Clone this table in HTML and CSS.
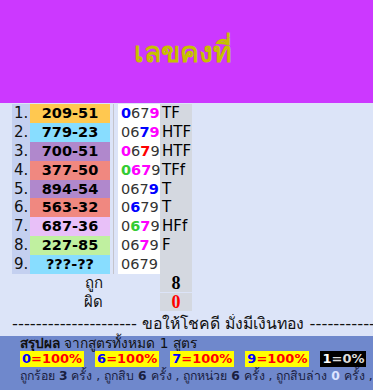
FILE: index.html
```html
<!DOCTYPE html>
<html lang="th">
<head>
<meta charset="utf-8">
<link rel="stylesheet" href="styles.css">
</head>
<body>
<header class="top"><h1 class="title">เลขคงที่</h1></header>
<main class="board">
  <div class="grid">
    <div class="n">1.</div><div class="c c-or">209-51</div><div class="sep"></div><div class="w"><b class="bl">0</b>67<b class="mg">9</b></div><div class="g">TF</div>
    <div class="n">2.</div><div class="c c-sky">779-23</div><div class="sep"></div><div class="w">06<b class="bl">7</b><b class="mg">9</b></div><div class="g">HTF</div>
    <div class="n">3.</div><div class="c c-pu">700-51</div><div class="sep"></div><div class="w"><b class="mg">0</b>6<b class="rd">7</b>9</div><div class="g">HTF</div>
    <div class="n">4.</div><div class="c c-sa">377-50</div><div class="sep"></div><div class="w"><b class="gr">0</b><b class="mg">6</b><b class="mg">7</b>9</div><div class="g">TFf</div>
    <div class="n">5.</div><div class="c c-pu">894-54</div><div class="sep"></div><div class="w">067<b class="bl">9</b></div><div class="g">T</div>
    <div class="n">6.</div><div class="c c-sa">563-32</div><div class="sep"></div><div class="w">0<b class="bl">6</b>79</div><div class="g">T</div>
    <div class="n">7.</div><div class="c c-la">687-36</div><div class="sep"></div><div class="w">0<b class="gr">6</b><b class="mg">7</b>9</div><div class="g">HFf</div>
    <div class="n">8.</div><div class="c c-li">227-85</div><div class="sep"></div><div class="w">06<b class="mg">7</b>9</div><div class="g">F</div>
    <div class="n">9.</div><div class="c c-sky">???-??</div><div class="sep"></div><div class="w">0679</div><div class="g"></div>
    <div class="lbl">ถูก</div><div class="blank"></div><div class="g val">8</div>
    <div class="lbl">ผิด</div><div class="blank"></div><div class="g val red">0</div>
  </div>
  <div class="wish">--------------------- <span class="th">ขอให้โชคดี มั่งมีเงินทอง</span> -----------</div>
</main>
<section class="sum">
  <div class="sum-head"><b>สรุปผล</b> จากสูตรทั้งหมด 1 สูตร</div>
  <div class="badges">
    <span class="bd"><span class="k">0</span>=100%</span>
    <span class="bd"><span class="k">6</span>=100%</span>
    <span class="bd"><span class="k">7</span>=100%</span>
    <span class="bd"><span class="k">9</span>=100%</span>
    <span class="bd bd-dark"><span class="k">1</span>=0%</span>
  </div>
  <div class="sum-foot">ถูกร้อย <b>3</b> ครั้ง , ถูกสิบ <b>6</b> ครั้ง , ถูกหน่วย <b>6</b> ครั้ง , ถูกสิบล่าง <b class="pale">0</b> ครั้ง ,</div>
</section>
</body>
</html>
```

FILE: styles.css
```css
html, body {
  margin: 0;
  padding: 0;
}
body {
  width: 373px;
  height: 390px;
  overflow: hidden;
  background: #dce4f8;
  font-family: "DejaVu Sans", "Noto Sans", sans-serif;
}
.top {
  height: 103px;
  background: #cc38ff;
  display: flex;
  align-items: center;
  justify-content: center;
  padding-right: 8px;
  box-sizing: border-box;
}
.title {
  margin: 0;
  font-size: 28.5px;
  font-weight: bold;
  color: #c6c000;
}
.board {
  padding-top: 1px;
}
.grid {
  display: grid;
  grid-template-columns: 12px 18px 80px 8px 42px 32px;
  grid-auto-rows: 18.875px;
}
.grid > .n { grid-column: 2; }
.n {
  background: #c4d0f0;
  font-size: 15px;
  line-height: 18.875px;
  padding-left: 2px;
  color: #111;
}
.c {
  font-size: 14.5px;
  font-weight: bold;
  line-height: 18.875px;
  text-align: center;
  color: #000;
}
.c-or { background: #ffc850; }
.c-sky { background: #88ddff; }
.c-pu { background: #b088cc; }
.c-sa { background: #f08880; }
.c-la { background: #e8c0f8; }
.c-li { background: #c0f0a0; }
.sep {
  display: flex;
  justify-content: center;
}
.sep::before {
  content: "";
  width: 1px;
  margin-left: -1px;
  background: #c4c4cc;
}
.w {
  background: #fff;
  font-size: 14.5px;
  line-height: 18.875px;
  padding-left: 3px;
  color: #333;
}
.w b { font-weight: bold; }
.bl { color: #0000ff; }
.mg { color: #ff00ff; }
.rd { color: #ff0000; }
.gr { color: #33cc33; }
.g {
  background: #d4d8e0;
  font-size: 15px;
  line-height: 18.875px;
  padding-left: 2px;
  color: #000;
  white-space: nowrap;
}
.grid > .lbl {
  grid-column: 1 / 4;
  text-align: right;
  padding-right: 7px;
  font-size: 15px;
  line-height: 18px;
  color: #111;
}
.grid > .blank { grid-column: 4 / 6; }
.grid > .val {
  font-family: "Liberation Serif", serif;
  font-weight: bold;
  font-size: 18px;
  line-height: 18px;
  text-align: center;
  padding-left: 0;
}
.grid > .lbl, .grid > .blank, .grid > .val { height: 18px; }
.red { color: #ff0000; }
.wish {
  margin-top: 2px;
  padding-left: 12px;
  font-size: 16.5px;
  line-height: 20px;
  white-space: nowrap;
  overflow: hidden;
  color: #111;
}
.th { font-size: 15.8px; }
.sum {
  margin-top: 2px;
  background: #6f88cc;
  height: 56px;
  padding: 0 0 0 20px;
  color: #111;
}
.sum-head {
  font-size: 13.7px;
  line-height: 15px;
  white-space: nowrap;
}
.badges {
  display: flex;
  gap: 11px;
}
.bd {
  background: #ffff00;
  color: #ff0000;
  font-weight: bold;
  font-size: 13px;
  line-height: 16px;
  padding: 0 2px;
}
.bd .k { color: #0000ff; }
.bd-dark { background: #000; color: #dddddd; }
.bd-dark .k { color: #fff; }
.sum-foot {
  font-size: 12.3px;
  line-height: 19px;
  color: #1a2040;
  white-space: nowrap;
  overflow: hidden;
}
.pale { color: #dde4ff; }
```
